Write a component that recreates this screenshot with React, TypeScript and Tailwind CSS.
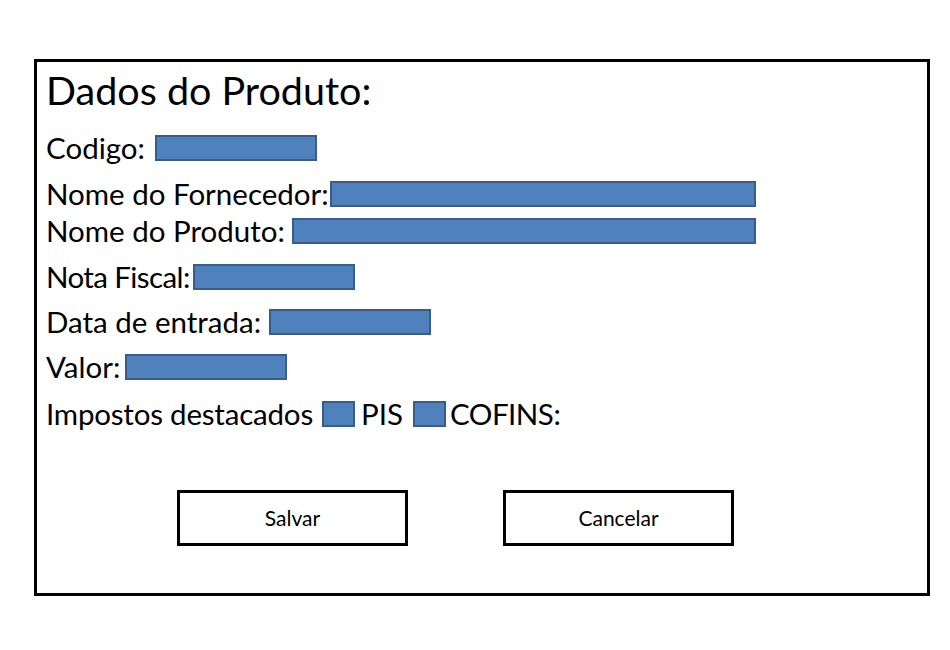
const FIELD = 'h-[26px] shrink-0 border-2 border-[#385d8a] bg-[#4f81bd]'

const ROWS = [
  { label: 'Codigo:', labelW: 'w-[109px]', fieldW: 'w-[162px]', mt: 'mt-[25px]', track: '' },
  { label: 'Nome do Fornecedor:', labelW: 'w-[284px]', fieldW: 'w-[426px]', mt: 'mt-[20px]', track: '' },
  { label: 'Nome do Produto:', labelW: 'w-[246px]', fieldW: 'w-[464px]', mt: 'mt-[11px]', track: '' },
  { label: 'Nota Fiscal:', labelW: 'w-[147px]', fieldW: 'w-[162px]', mt: 'mt-[20px]', track: 'tracking-[-0.6px]' },
  { label: 'Data de entrada:', labelW: 'w-[223px]', fieldW: 'w-[162px]', mt: 'mt-[19px]', track: '' },
  { label: 'Valor:', labelW: 'w-[79px]', fieldW: 'w-[162px]', mt: 'mt-[19px]', track: '' },
]

export default function App() {
  return (
    <div className="h-[650px] w-[950px] bg-white pt-[59px] pl-[34px] font-['Lato',sans-serif] text-black">
      <div className="flex h-[537px] w-[896px] flex-col border-[3px] border-black pl-[9px]">
        {/* Title */}
        <div className="mt-[8px] h-[40px] whitespace-nowrap text-[39.5px] leading-[40px]">Dados do Produto:</div>

        {/* Fields */}
        {ROWS.map((row) => (
          <div key={row.label} className={`flex h-[26px] items-center ${row.mt}`}>
            <span className={`${row.labelW} ${row.track} shrink-0 whitespace-nowrap text-[29.5px] leading-none`}>
              {row.label}
            </span>
            <div className={`${FIELD} ${row.fieldW}`} />
          </div>
        ))}

        {/* Impostos */}
        <div className="mt-[21px] flex h-[26px] items-center text-[29.5px] leading-none">
          <span className="w-[276px] shrink-0 whitespace-nowrap tracking-[-0.2px]">Impostos destacados</span>
          <div className={`${FIELD} w-[33px]`} />
          <span className="ml-[6px] w-[52px] shrink-0">PIS</span>
          <div className={`${FIELD} w-[33px]`} />
          <span className="ml-[4px] tracking-[-0.5px]">COFINS:</span>
        </div>

        {/* Buttons */}
        <div className="mt-[63px] flex gap-[95px] pl-[131px]">
          <button className="flex h-[56px] w-[231px] items-center justify-center border-[3px] border-black text-[21px]">
            Salvar
          </button>
          <button className="flex h-[56px] w-[231px] items-center justify-center border-[3px] border-black text-[21px]">
            Cancelar
          </button>
        </div>
      </div>
    </div>
  )
}
